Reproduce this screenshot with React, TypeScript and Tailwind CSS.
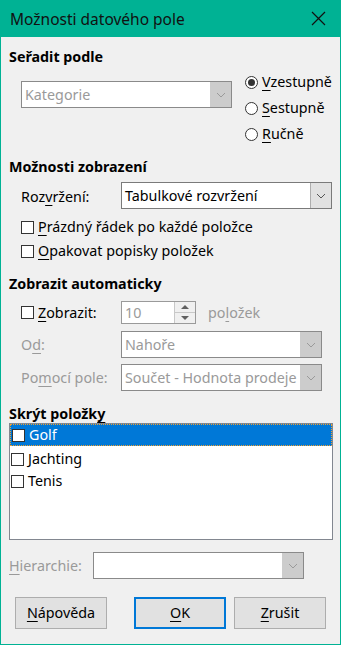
import React from 'react';

const FONT = { fontFamily: '"Noto Sans", "Open Sans", sans-serif' };

function Chevron({ disabled }: { disabled?: boolean }) {
  return (
    <svg width="10" height="6" viewBox="0 0 10 6">
      <path d="M1 1 L5 5 L9 1" fill="none" stroke={disabled ? '#9a9a9a' : '#555'} strokeWidth="1" />
    </svg>
  );
}

function Combo({ text, className, disabled }: { text: string; className: string; disabled?: boolean }) {
  return (
    <div className={`flex h-[27px] border bg-white ${disabled ? 'border-[#8a8a8a]' : 'border-[#7a7a7a]'} ${className}`}>
      <div
        className={`flex flex-1 items-center overflow-hidden whitespace-nowrap pl-[3px] ${disabled ? 'text-[#9a9a9a]' : 'text-black'}`}
      >
        {text}
      </div>
      <div
        className={`flex w-[21px] items-center justify-center ${disabled ? 'bg-[#cccccc]' : 'border-l border-[#adadad] bg-[#e1e1e1]'}`}
      >
        <Chevron disabled={disabled} />
      </div>
    </div>
  );
}

function Box() {
  return <span className="block h-[13px] w-[13px] shrink-0 border border-[#333] bg-white" />;
}

function Radio({ checked }: { checked?: boolean }) {
  return (
    <span className="flex h-[13px] w-[13px] shrink-0 items-center justify-center rounded-full border border-[#333] bg-white">
      {checked && <span className="block h-[7px] w-[7px] rounded-full bg-[#333]" />}
    </span>
  );
}

function U({ children }: { children: React.ReactNode }) {
  return <span className="underline decoration-1 underline-offset-[3px]">{children}</span>;
}

function Heading({ children, className }: { children: React.ReactNode; className: string }) {
  return <div className={`h-[20px] font-bold leading-[20px] text-black ${className}`}>{children}</div>;
}

function Button({ children, primary }: { children: React.ReactNode; primary?: boolean }) {
  return (
    <div
      className={`flex h-[32px] w-[92px] items-center justify-center bg-[#e1e1e1] text-black ${primary ? 'border-2 border-[#0078d7]' : 'border border-[#adadad]'}`}
    >
      {children}
    </div>
  );
}

const items = ['Golf', 'Jachting', 'Tenis'];

export default function App() {
  return (
    <div
      style={FONT}
      className="flex h-[645px] w-[341px] flex-col overflow-hidden border-x border-b border-[#00b294] bg-[#f0f0f0] text-[14.3px] leading-[20px]"
    >
      {/* title bar */}
      <div className="flex h-[37px] shrink-0 items-center justify-between bg-[#00b294] pl-[9px] pr-[14px] text-[15.5px] text-[#111]">
        <span>Možnosti datového pole</span>
        <svg width="15" height="15" viewBox="0 0 15 15">
          <path d="M1 1 L14 14 M14 1 L1 14" stroke="#111" strokeWidth="1.2" />
        </svg>
      </div>

      <div className="flex flex-col pl-[8px] pr-[7px]">
        <Heading className="mt-[10px]">Seřadit podle</Heading>
        <div className="mt-[2px] flex">
          <Combo text="Kategorie" disabled className="ml-[12px] mt-[12px] w-[211px]" />
          <div className="ml-[13px] flex flex-col">
            <div className="flex h-[26px] items-center gap-[4px]">
              <Radio checked />
              <span><U>V</U>zestupně</span>
            </div>
            <div className="flex h-[26px] items-center gap-[4px]">
              <Radio />
              <span><U>S</U>estupně</span>
            </div>
            <div className="flex h-[26px] items-center gap-[4px]">
              <Radio />
              <span><U>R</U>učně</span>
            </div>
          </div>
        </div>

        <Heading className="mt-[10px]">Možnosti zobrazení</Heading>
        <div className="ml-[12px] mt-[5px] flex items-center">
          <span className="w-[100px] pt-[2px]">Roz<U>v</U>ržení:</span>
          <Combo text="Tabulkové rozvržení" className="w-[211px]" />
        </div>
        <div className="ml-[12px] mt-[6px] flex h-[24px] items-center gap-[4px]">
          <Box />
          <span><U>P</U>rázdný řádek po každé položce</span>
        </div>
        <div className="ml-[12px] flex h-[24px] items-center gap-[4px]">
          <Box />
          <span><U>O</U>pakovat popisky položek</span>
        </div>

        <Heading className="mt-[11px]">Zobrazit automaticky</Heading>
        <div className="ml-[12px] mt-[7px] flex items-center">
          <div className="flex w-[100px] items-center gap-[4px]">
            <Box />
            <span><U>Z</U>obrazit:</span>
          </div>
          <div className="flex h-[23px] w-[75px] border border-[#9a9a9a] bg-white">
            <div className="flex flex-1 items-center pl-[3px] text-[#9a9a9a]">10</div>
            <div className="flex w-[21px] flex-col border-l border-[#c8c8c8] bg-[#f0f0f0]">
              <div className="flex flex-1 items-center justify-center border-b border-[#c8c8c8]">
                <svg width="8" height="4" viewBox="0 0 8 4"><path d="M0 4 L4 0 L8 4 Z" fill="#606060" /></svg>
              </div>
              <div className="flex flex-1 items-center justify-center">
                <svg width="8" height="4" viewBox="0 0 8 4"><path d="M0 0 L8 0 L4 4 Z" fill="#606060" /></svg>
              </div>
            </div>
          </div>
          <span className="ml-[12px] text-[#9a9a9a]">po<U>l</U>ožek</span>
        </div>
        <div className="ml-[12px] mt-[7px] flex items-center text-[#9a9a9a]">
          <span className="w-[100px]">O<U>d</U>:</span>
          <Combo text="Nahoře" disabled className="w-[201px]" />
        </div>
        <div className="ml-[12px] mt-[6px] flex items-center text-[#9a9a9a]">
          <span className="w-[100px]">Po<U>m</U>ocí pole:</span>
          <Combo text="Součet - Hodnota prodeje" disabled className="w-[201px]" />
        </div>

        <Heading className="mt-[13px]">Skrýt položk<U>y</U></Heading>
        <div className="mt-[-1px] flex h-[117px] flex-col border border-[#828790] bg-white">
          {items.map((it, i) => (
            <div
              key={it}
              className={`flex h-[22px] shrink-0 items-center gap-[4px] pl-[1px] ${i === 0 ? 'border border-dotted border-[#f0a030] bg-[#0078d7] text-white' : 'text-black'} ${i === 1 ? 'mt-[2px]' : ''}`}
            >
              <Box />
              <span>{it}</span>
            </div>
          ))}
        </div>

        <div className="mt-[12px] flex items-center">
          <span className="w-[84px] text-[#9a9a9a]"><U>H</U>ierarchie:</span>
          <Combo text="" disabled className="w-[211px]" />
        </div>

        <div className="mt-[18px] flex pl-[6px]">
          <Button><U>N</U>ápověda</Button>
          <div className="ml-[27px]">
            <Button primary><U>O</U>K</Button>
          </div>
          <div className="ml-[8px]">
            <Button><U>Z</U>rušit</Button>
          </div>
        </div>
      </div>
    </div>
  );
}
